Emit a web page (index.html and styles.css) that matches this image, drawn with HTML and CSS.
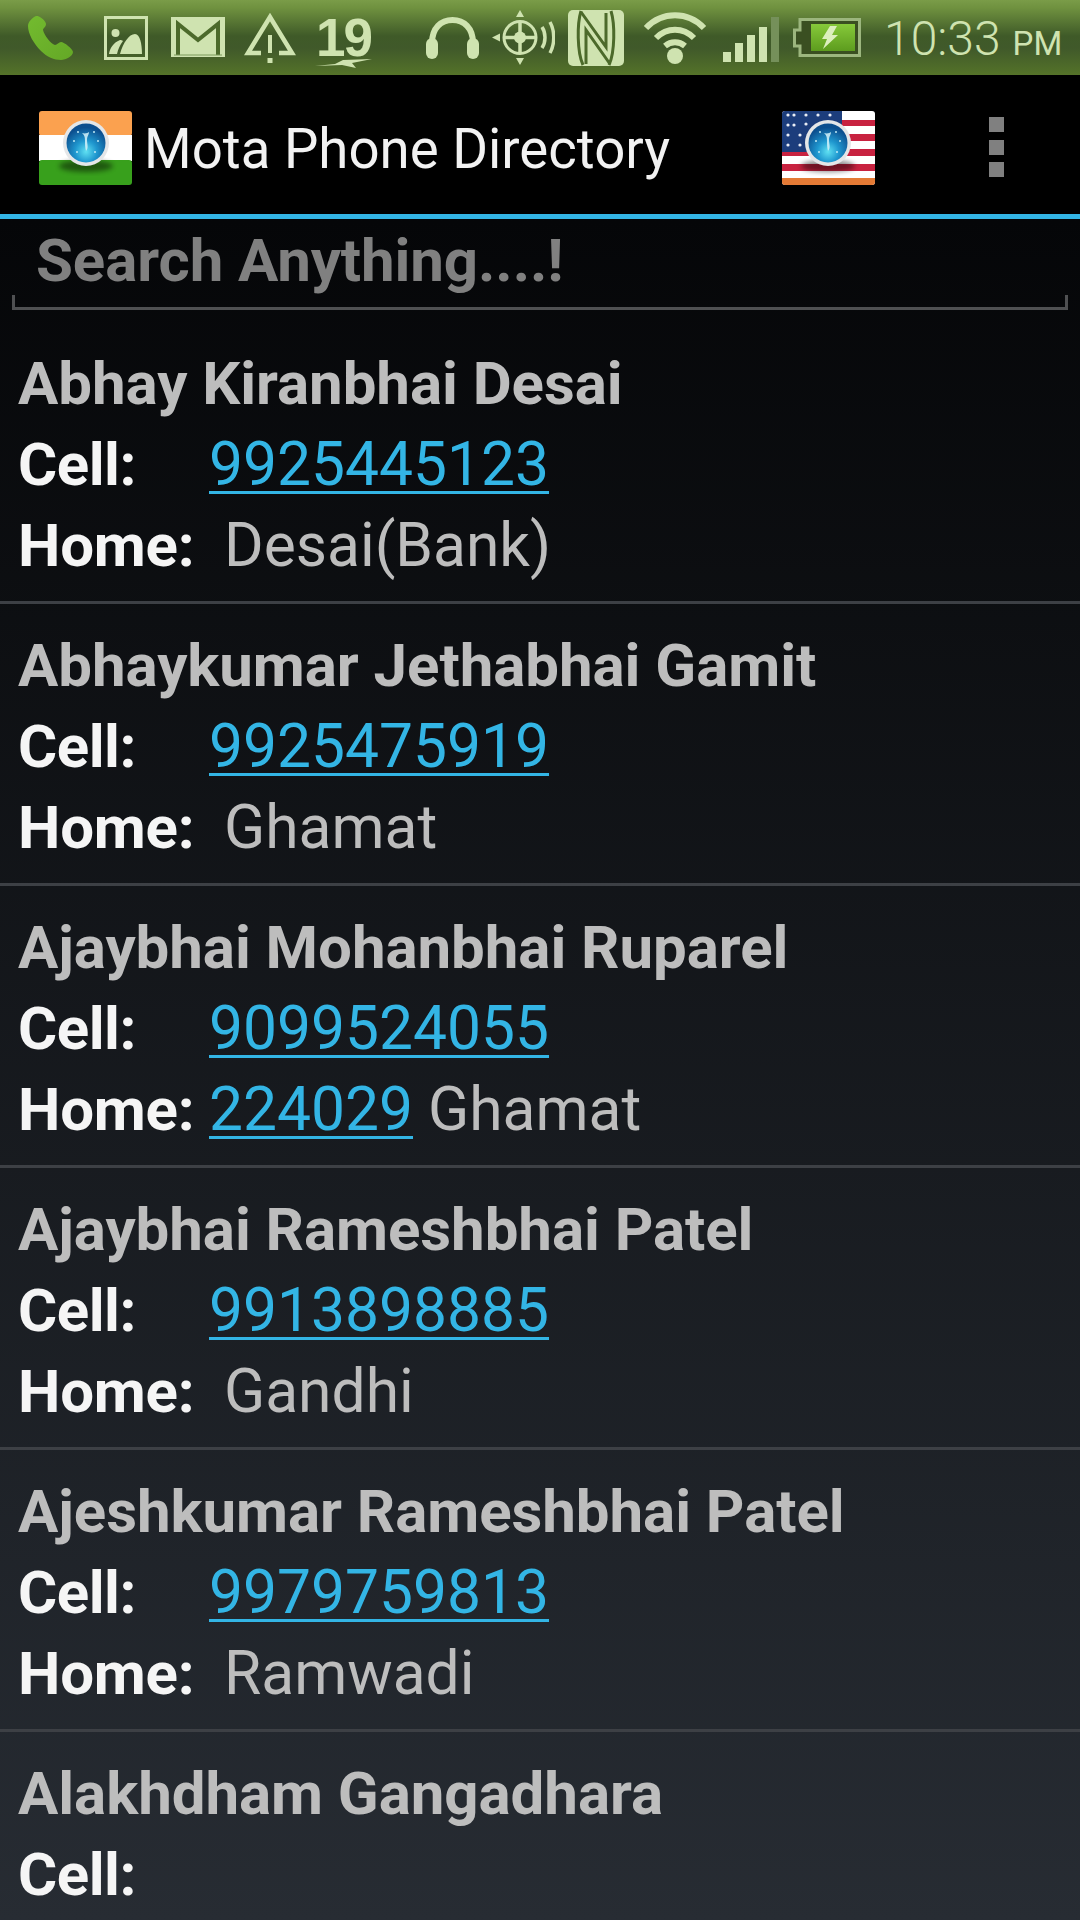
FILE: index.html
```html
<!DOCTYPE html>
<html lang="en">
<head>
<meta charset="utf-8">
<title>Mota Phone Directory</title>
<link rel="stylesheet" href="styles.css">
</head>
<body>
<svg class="defs" width="0" height="0" aria-hidden="true">
  <defs>
    <radialGradient id="orb" cx="50%" cy="72%" r="62%">
      <stop offset="0" stop-color="#5fe0f2"/>
      <stop offset=".45" stop-color="#1f97cf"/>
      <stop offset="1" stop-color="#0c4f8f"/>
    </radialGradient>
    <filter id="soft" x="-30%" y="-30%" width="160%" height="160%"><feGaussianBlur stdDeviation="2.500"/></filter>
    <filter id="softer" x="-5%" y="-5%" width="110%" height="110%"><feGaussianBlur stdDeviation=".6"/></filter>
    <linearGradient id="batt" x1="0" y1="0" x2="0" y2="1">
      <stop offset="0" stop-color="#86c93a"/>
      <stop offset="1" stop-color="#5d9c1e"/>
    </linearGradient>
    <linearGradient id="handset" x1="0" y1="0" x2="1" y2="1">
      <stop offset="0" stop-color="#73bb2f"/>
      <stop offset="1" stop-color="#64a826"/>
    </linearGradient>
    <g id="globe">
      <ellipse cx="23" cy="47" rx="27" ry="6" fill="#000" opacity=".45" filter="url(#soft)"/>
      <circle cx="23" cy="24" r="23" fill="#e4e6e8"/>
      <circle cx="23" cy="24" r="19.500" fill="url(#orb)"/>
      <path d="M19 14c3 1 6 0 7-1 0 3-2 4-2 8s2 8-1 11c-1-3-1-7-1-10s0-5-3-8z" fill="#d6f3fa" opacity=".85"/>
      <circle cx="11" cy="22" r="1" fill="#bfeaf6"/><circle cx="35" cy="22" r="1" fill="#bfeaf6"/>
      <circle cx="15" cy="13" r="1" fill="#bfeaf6"/><circle cx="31" cy="13" r="1" fill="#bfeaf6"/>
      <circle cx="14" cy="33" r="1" fill="#bfeaf6"/><circle cx="32" cy="33" r="1" fill="#bfeaf6"/>
    </g>
  </defs>
</svg>
<div class="phone">
  <header class="status">
    <svg class="si i-phone" viewBox="0 0 45 44"><path d="M8 0C4 2 0 6 0 10c0 8 6 18 13 25 6 6 13 9 20 9 5 0 12-4 12-8 0-3-9-10-12-10-2 0-4 3-6 3-4-1-11-10-12-15 0-2 3-3 3-6C18 5 11-1 8 0z" fill="url(#handset)"/></svg>
    <svg class="si i-gallery" viewBox="0 0 44 44"><rect x="1.500" y="1.500" width="41" height="41" fill="none" stroke="#cfe3b0" stroke-width="3"/><circle cx="11.500" cy="17" r="4" fill="#cfe3b0"/><path d="M5 38c1-6 4-11 11-14 1 0 2 0 3 1-3 4-5 8-6 13zM16 38c3-11 9-20 15-20 5 0 7 10 7 20z" fill="#cfe3b0"/></svg>
    <svg class="si i-mail" viewBox="0 0 54 40"><rect width="54" height="40" fill="#cfe3b0"/><path d="M7 38V7l20 16L47 7v31" fill="none" stroke="#4c6a2b" stroke-width="4"/><path d="M3 38h48" stroke="#7d9a5c" stroke-width="1"/></svg>
    <svg class="si i-warn" viewBox="0 0 52 50"><path d="M17 40H4L26 4l22 36H35" fill="none" stroke="#cfe3b0" stroke-width="4.500"/><rect x="24" y="22" width="4" height="18" fill="#cfe3b0"/><rect x="23.500" y="45" width="5" height="5" fill="#cfe3b0"/></svg>
    <div class="date"><span class="date-num">19</span><svg class="bolt" viewBox="0 0 57 10"><path d="M0 8l20-2 8-4 29-1-20 4 4 5-14-3z" fill="#cfe3b0"/></svg></div>
    <svg class="si i-head" viewBox="0 0 53 42"><path d="M6 26C6 11 15 3 26.500 3S47 11 47 26" fill="none" stroke="#cfe3b0" stroke-width="6"/><rect x="0" y="21" width="12" height="21" rx="6" fill="#cfe3b0"/><rect x="41" y="21" width="12" height="21" rx="6" fill="#cfe3b0"/></svg>
    <svg class="si i-target" viewBox="0 0 63 55"><circle cx="28" cy="27.500" r="16" fill="none" stroke="#cfe3b0" stroke-width="3"/><path d="M28 12v31M12 27.500h32" stroke="#cfe3b0" stroke-width="3.500"/><circle cx="28" cy="27.500" r="6" fill="#cfe3b0"/><path d="M28 0l4 7h-8zM28 55l-4-7h8zM0 27.500l8-4v8z" fill="#cfe3b0"/><path d="M50 17c4 6 4 15 0 21M58 12c5 9 5 22 0 31" fill="none" stroke="#cfe3b0" stroke-width="3.500"/></svg>
    <svg class="si i-nfc" viewBox="0 0 56 56"><rect width="56" height="56" rx="5" fill="#cfe3b0"/><g fill="none" stroke="#4c6a2b" stroke-width="3"><path d="M13 1C9 14 9 42 15 55"/><path d="M43 1C47 14 47 42 41 55"/><path d="M13 2l25 35V3"/><path d="M42 54L18 20v34"/></g></svg>
    <svg class="si i-wifi" viewBox="0 0 64 53"><path d="M3 17C19 0 45 0 61 17M13 27c11-11 27-11 38 0M22 35c6-5 14-5 20 0" fill="none" stroke="#cfe3b0" stroke-width="6"/><circle cx="32" cy="45" r="8" fill="#cfe3b0"/></svg>
    <svg class="si i-signal" viewBox="0 0 56 45"><rect x="0" y="35" width="8" height="10" fill="#cfe3b0"/><rect x="12" y="26" width="8" height="19" fill="#cfe3b0"/><rect x="24" y="18" width="8" height="27" fill="#cfe3b0"/><rect x="36" y="10" width="8" height="35" fill="#cfe3b0"/><rect x="48" y="0" width="8" height="45" fill="#75905a"/></svg>
    <svg class="si i-batt" viewBox="0 0 68 39"><path d="M7 1.500h59.500v36H7V28H1.500V12H7z" fill="#3a4f21" stroke="#9cb67e" stroke-width="3"/><rect x="18" y="6" width="44" height="27" fill="url(#batt)"/><path d="M37 8h7l-5 9h6L30 31l4-10h-5z" fill="#dcefbe"/></svg>
    <div class="clock">10:33<span class="ampm">PM</span></div>
  </header>

  <nav class="actionbar">
    <svg class="flag" viewBox="0 0 93 74">
      <g filter="url(#softer)">
        <rect width="93" height="25" rx="3" fill="#fba14f"/>
        <rect y="24" width="93" height="26" fill="#fff"/>
        <rect y="49" width="93" height="25" rx="3" fill="#37a01d"/>
      </g>
      <use href="#globe" x="24" y="8"/>
    </svg>
    <div class="app-title">Mota Phone Directory</div>
    <svg class="flag flag-us" viewBox="0 0 93 74">
      <g filter="url(#softer)">
        <rect width="93" height="74" rx="3" fill="#fff"/>
        <rect y="9" width="93" height="6" fill="#c8203f"/>
        <rect y="23" width="93" height="7" fill="#c8203f"/>
        <rect y="38" width="93" height="7" fill="#c8203f"/>
        <rect y="53" width="93" height="7" fill="#c8203f"/>
        <path d="M0 67h93v4a3 3 0 0 1-3 3H3a3 3 0 0 1-3-3z" fill="#e47a34"/>
        <path d="M3 0h57v41H0V3a3 3 0 0 1 3-3z" fill="#1f3d7c"/>
        <g fill="#e8edf5">
          <circle cx="6" cy="4" r="1.600"/><circle cx="12" cy="4" r="1.600"/><circle cx="24" cy="4" r="1.600"/><circle cx="36" cy="4" r="1.600"/><circle cx="48" cy="4" r="1.600"/>
          <circle cx="6" cy="14" r="1.600"/><circle cx="12" cy="14" r="1.600"/><circle cx="24" cy="13" r="1.600"/>
          <circle cx="6" cy="24" r="1.600"/><circle cx="18" cy="24" r="1.600"/>
          <circle cx="6" cy="34" r="1.600"/><circle cx="18" cy="34" r="1.600"/>
        </g>
      </g>
      <use href="#globe" x="23" y="8"/>
    </svg>
    <div class="overflow"><span></span><span></span><span></span></div>
  </nav>

  <div class="searchbox"><div class="search-field">Search Anything....!</div></div>

  <main class="list">
    <article class="row">
      <div class="name">Abhay Kiranbhai Desai</div>
      <div class="line"><b class="cell">Cell:</b><a class="num">9925445123</a></div>
      <div class="line"><b class="home">Home:</b><span class="place">Desai(Bank)</span></div>
    </article>
    <article class="row">
      <div class="name">Abhaykumar Jethabhai Gamit</div>
      <div class="line"><b class="cell">Cell:</b><a class="num">9925475919</a></div>
      <div class="line"><b class="home">Home:</b><span class="place">Ghamat</span></div>
    </article>
    <article class="row">
      <div class="name">Ajaybhai Mohanbhai Ruparel</div>
      <div class="line"><b class="cell">Cell:</b><a class="num">9099524055</a></div>
      <div class="line"><b class="home tight">Home:</b><a class="num">224029</a><span class="place after">Ghamat</span></div>
    </article>
    <article class="row">
      <div class="name">Ajaybhai Rameshbhai Patel</div>
      <div class="line"><b class="cell">Cell:</b><a class="num">9913898885</a></div>
      <div class="line"><b class="home">Home:</b><span class="place">Gandhi</span></div>
    </article>
    <article class="row">
      <div class="name">Ajeshkumar Rameshbhai Patel</div>
      <div class="line"><b class="cell">Cell:</b><a class="num">9979759813</a></div>
      <div class="line"><b class="home">Home:</b><span class="place">Ramwadi</span></div>
    </article>
    <article class="row">
      <div class="name">Alakhdham Gangadhara</div>
      <div class="line"><b class="cell">Cell:</b></div>
    </article>
  </main>
</div>
</body>
</html>
```
FILE: styles.css
```css
* { box-sizing: border-box; }
html, body { margin: 0; padding: 0; }
body { width: 1080px; height: 1920px; overflow: hidden; background: #000; font-family: Roboto, "Liberation Sans", sans-serif; }
.defs { position: absolute; }
.phone { width: 1080px; height: 1920px; display: flex; flex-direction: column; overflow: hidden; background: linear-gradient(#050608 0, #050608 219px, #272c33 1920px); }

.status { height: 75px; flex: none; display: flex; align-items: center; padding-left: 28px; background: linear-gradient(#7a9c48 0, #6f913f 8px, #3f5a28 36px, #40592a 48px, #527029 72px, #557329 75px); }
.si { display: block; flex: none; }
.i-phone { width: 45px; height: 44px; }
.i-gallery { width: 44px; height: 44px; margin-left: 31px; }
.i-mail { width: 54px; height: 40px; margin-left: 23px; margin-bottom: 2px; }
.i-warn { width: 52px; height: 50px; margin-left: 19px; }
.date { width: 57px; flex: none; margin-left: 19px; margin-top: 10px; }
.date-num { display: block; color: #cfe3b0; font: 700 53px/41px "Liberation Sans", sans-serif; letter-spacing: -2px; text-align: center; }
.bolt { display: block; width: 57px; height: 10px; }
.i-head { width: 53px; height: 42px; margin-left: 54px; }
.i-target { width: 63px; height: 55px; margin-left: 13px; }
.i-nfc { width: 56px; height: 56px; margin-left: 13px; }
.i-wifi { width: 64px; height: 53px; margin-left: 19px; }
.i-signal { width: 56px; height: 45px; margin-left: 16px; margin-top: 4px; }
.i-batt { width: 68px; height: 39px; margin-left: 14px; }
.clock { margin: 6px 0 0 23px; color: #cfe3b0; font: 300 48px/75px Roboto, sans-serif; white-space: nowrap; }
.ampm { font-size: 33px; margin-left: 12px; font-weight: 400; }

.actionbar { height: 144px; flex: none; display: flex; align-items: flex-start; padding: 36px 76.500px 0 39px; background: #000; border-bottom: 5px solid #33b5e5; }
.flag { display: block; width: 93px; height: 74px; flex: none; overflow: visible; }
.app-title { flex: 1; margin: 8px 0 0 12px; color: #f2f2f2; font-size: 54.600px; line-height: 60px; white-space: nowrap; }
.overflow { width: 15px; display: flex; flex-direction: column; gap: 7.500px; margin: 6px 0 0 113.500px; }
.overflow span { display: block; width: 15px; height: 15px; background: #808080; }

.searchbox { height: 91px; flex: none; padding: 0 12px; }
.search-field { position: relative; height: 91px; padding-left: 24px; color: #808080; font-size: 60px; font-weight: 700; letter-spacing: -.1px; line-height: 84px; border-bottom: 3px solid #4f5052; white-space: nowrap; }
.search-field::before, .search-field::after { content: ""; position: absolute; bottom: 0; width: 3px; height: 12px; background: #4f5052; }
.search-field::before { left: 0; }
.search-field::after { right: 0; }

.list { flex: 1; min-height: 0; }
.row { height: 282px; padding: 21px 0 0 18px; border-bottom: 3px solid #3d4045; }
.row:first-child { height: 294px; padding-top: 33px; }
.name { color: #bdbdbd; font-size: 60px; font-weight: 700; letter-spacing: -.05px; line-height: 81px; white-space: nowrap; }
.line { display: flex; font-size: 60.500px; line-height: 81px; white-space: nowrap; }
.cell { width: 191px; color: #f5f5f5; font-size: 60px; font-weight: 700; letter-spacing: -.5px; }
.home { width: 206px; color: #f5f5f5; font-size: 60px; font-weight: 700; letter-spacing: -.2px; }
.home.tight { width: 191px; }
.num { color: #33b5e5; text-decoration: underline; text-decoration-thickness: 3px; text-underline-offset: 6px; }
.place { color: #bdbdbd; }
.place.after { margin-left: 15px; }
```
